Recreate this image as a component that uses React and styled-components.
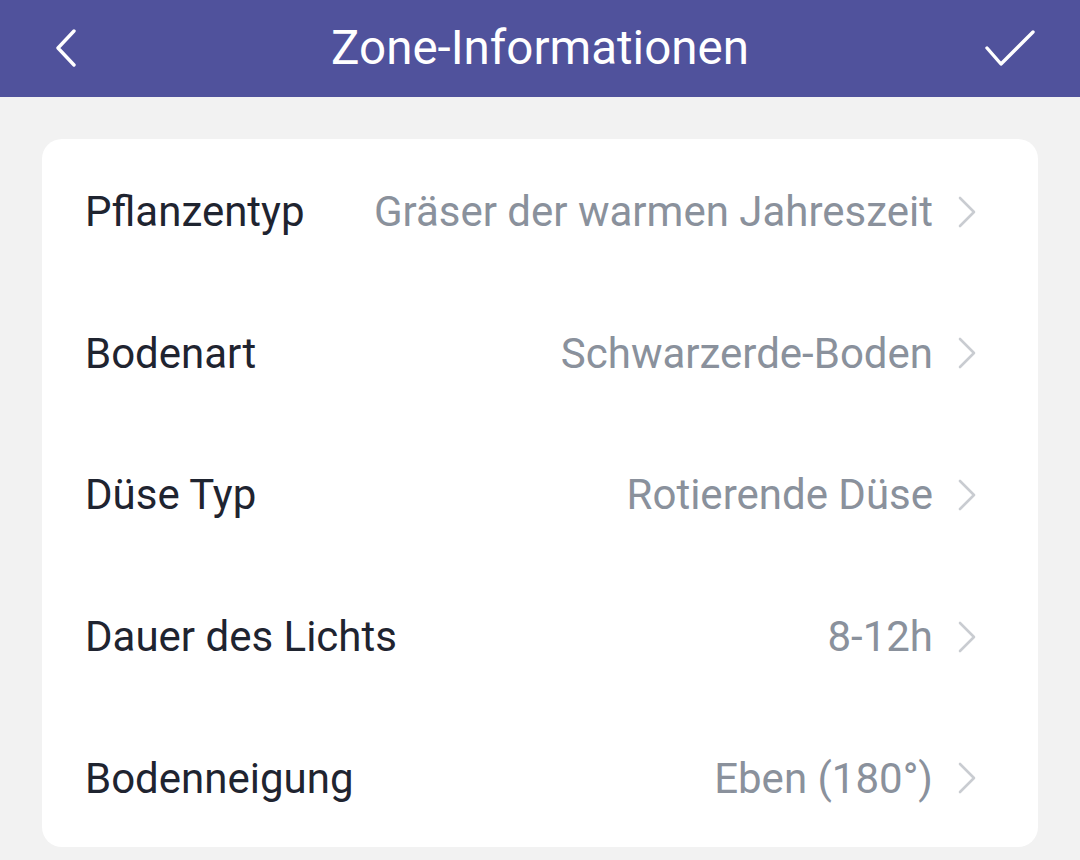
import React from 'react';
import styled, { createGlobalStyle } from 'styled-components';

const GlobalStyle = createGlobalStyle`
  html, body { margin: 0; padding: 0; background: #f2f2f2; }
  body { font-family: Roboto, "Noto Sans", sans-serif; }
`;

const Page = styled.div`
  width: 1080px;
  height: 860px;
  background: #f2f2f2;
  overflow: hidden;
`;

const Header = styled.header`
  height: 97px;
  background: #50529c;
  display: grid;
  grid-template-columns: 1fr auto 1fr;
  align-items: center;
  padding: 0 44px 2px;
  box-sizing: border-box;
`;

const Title = styled.h1`
  margin: 0;
  color: #fff;
  font-size: 47.5px;
  font-weight: 400;
`;

const IconBtn = styled.div`
  height: 40px;
  display: flex;
  align-items: center;
  justify-content: ${p => (p.end ? 'flex-end' : 'flex-start')};
  padding-left: ${p => (p.end ? 0 : 10)}px;
`;

const Card = styled.div`
  margin: 42px 42px 0;
  background: #fff;
  border-radius: 20px;
`;

const Row = styled.div`
  height: 141.6px;
  box-sizing: border-box;
  display: flex;
  align-items: center;
  padding: 4px 62px 0 43px;
`;

const Label = styled.span`
  flex: 1;
  font-size: 42px;
  color: #1f2430;
`;

const Value = styled.span`
  font-size: 42px;
  color: #8a919c;
  margin-right: 25px;
`;

const items = [
  ['Pflanzentyp', 'Gräser der warmen Jahreszeit'],
  ['Bodenart', 'Schwarzerde-Boden'],
  ['Düse Typ', 'Rotierende Düse'],
  ['Dauer des Lichts', '8-12h'],
  ['Bodenneigung', 'Eben (180°)'],
];

const Chevron = () => (
  <svg width="18" height="32" viewBox="0 0 18 32" fill="none">
    <path d="M2 2 L16 16 L2 30" stroke="#c9ccd1" strokeWidth="2.6" strokeLinecap="round" strokeLinejoin="round" />
  </svg>
);

export default function App() {
  return (
    <Page>
      <GlobalStyle />
      <Header>
        <IconBtn>
          <svg width="24" height="38" viewBox="0 0 24 38" fill="none">
            <path d="M20 2 L4 19 L20 36" stroke="#fff" strokeWidth="3.4" strokeLinecap="round" strokeLinejoin="round" />
          </svg>
        </IconBtn>
        <Title>Zone-Informationen</Title>
        <IconBtn end>
          <svg width="52" height="38" viewBox="0 0 52 38" fill="none">
            <path d="M3 19 L17 35 L49 3" stroke="#fff" strokeWidth="3.4" strokeLinecap="round" strokeLinejoin="round" />
          </svg>
        </IconBtn>
      </Header>
      <Card>
        {items.map(([l, v]) => (
          <Row key={l}>
            <Label>{l}</Label>
            <Value>{v}</Value>
            <Chevron />
          </Row>
        ))}
      </Card>
    </Page>
  );
}
